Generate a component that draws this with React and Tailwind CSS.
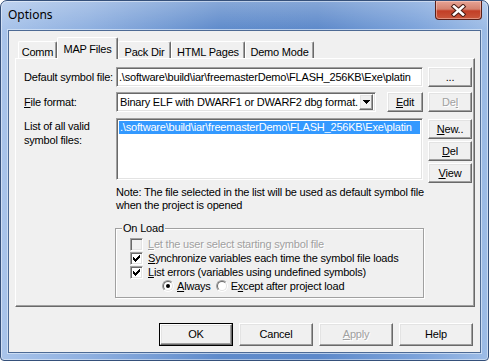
import React from "react";

const F = "font-['Liberation_Sans',Arial,sans-serif] text-[11px] tracking-[-0.2px] text-black";
const raised =
  "border border-t-white border-l-white border-r-[#696969] border-b-[#696969] shadow-[inset_-1px_-1px_0_#a0a0a0,inset_1px_1px_0_#e3e3e3] bg-[#f0f0f0]";
const sunken =
  "border border-t-[#a0a0a0] border-l-[#a0a0a0] border-r-white border-b-white shadow-[inset_1px_1px_0_#696969,inset_-1px_-1px_0_#e3e3e3]";
const dis = "text-[#a0a0a0] [text-shadow:1px_1px_0_#fff]";

function U({ children }) {
  return <span className="underline underline-offset-[1px] decoration-1">{children}</span>;
}

function Btn({ className = "", children, disabled }) {
  return (
    <div className={`${raised} ${className} flex items-center justify-center leading-none ${disabled ? dis : ""}`}>
      {children}
    </div>
  );
}

const CHECK = ["......X", ".....XX", "X...XXX", "XX.XXX.", "XXXXX..", ".XXX...", "..X...."];

function Check({ checked, disabled }) {
  return (
    <div
      className={`w-[13px] h-[13px] shrink-0 ${sunken} ${disabled ? "bg-[#f0f0f0]" : "bg-white"} flex items-center justify-center`}
    >
      {checked && (
        <svg width="7" height="7" viewBox="0 0 7 7" shapeRendering="crispEdges">
          {CHECK.flatMap((row, y) =>
            row.split("").map((c, x) => (c === "X" ? <rect key={`${x}-${y}`} x={x} y={y} width="1" height="1" fill="#000" /> : null))
          )}
        </svg>
      )}
    </div>
  );
}

function Radio({ checked }) {
  return (
    <div className="w-[12px] h-[12px] shrink-0 rounded-full border border-t-[#a0a0a0] border-l-[#a0a0a0] border-r-white border-b-white">
      <div className="w-full h-full rounded-full border border-t-[#696969] border-l-[#696969] border-r-[#e3e3e3] border-b-[#e3e3e3] bg-white flex items-center justify-center">
        {checked && <div className="w-[4px] h-[4px] rounded-full bg-black" />}
      </div>
    </div>
  );
}

function Tab({ children, className = "", selected }) {
  return (
    <div
      className={`${className} rounded-t-[2px] border-t border-l border-t-white border-l-white border-r border-r-[#696969] shadow-[inset_-1px_0_0_#a0a0a0] bg-[#f0f0f0] flex justify-center ${
        selected ? "h-[22px] -mb-[1px] relative z-10 pt-[3px]" : "h-[17px] pt-[2px]"
      }`}
    >
      {children}
    </div>
  );
}

export default function App() {
  return (
    <div className="w-[489px] h-[361px] bg-white">
      <div className="w-[489px] h-[361px] rounded-t-[7px] rounded-b-[4px] border border-[#35507a] bg-[linear-gradient(to_right,#a9c4ea,#8fb0e0_18%,#5f8bcb_45%,#5d89ca_65%,#7ba2da_85%,#9dbce6)] shadow-[inset_0_0_0_1px_rgba(255,255,255,0.45)] flex flex-col overflow-hidden">
        {/* title bar */}
        <div className="h-[29px] shrink-0 flex items-start justify-between bg-[linear-gradient(to_bottom,rgba(255,255,255,0.25),rgba(255,255,255,0))]">
          <span className="pl-[7px] pt-[6px] text-[12px] leading-[16px] font-['Noto_Sans',sans-serif] text-black">Options</span>
          <div className="mr-[6px] w-[47px] h-[19px] rounded-b-[4px] border border-t-0 border-[#5a1f17] bg-[linear-gradient(to_bottom,#e6a395,#d4826f_45%,#c23e26_55%,#c9573c)] shadow-[inset_0_0_0_1px_rgba(255,220,210,0.45)] flex items-center justify-center">
            <svg width="17" height="13" viewBox="0 0 17 13">
              <path d="M4 2.5 L13 10.5 M13 2.5 L4 10.5" stroke="#4a1c14" strokeWidth="4.6" strokeLinecap="square" />
              <path d="M4 2.5 L13 10.5 M13 2.5 L4 10.5" stroke="#fff" strokeWidth="2.6" strokeLinecap="square" />
            </svg>
          </div>
        </div>

        {/* client area */}
        <div className={`ml-[7px] w-[473px] h-[323px] border border-[#4d6a94] shadow-[0_0_0_1px_rgba(220,232,248,0.7)] bg-[#f0f0f0] flex flex-col ${F}`}>
          {/* tabs */}
          <div className="h-[27px] shrink-0 pl-[9px] flex items-end">
            <Tab className="w-[39px]">Comm</Tab>
            <Tab className="w-[61px]" selected>
              MAP Files
            </Tab>
            <Tab className="w-[53px]">Pack Dir</Tab>
            <Tab className="w-[74px]">HTML Pages</Tab>
            <Tab className="w-[69px]">Demo Mode</Tab>
          </div>

          {/* panel */}
          <div className="ml-[6px] w-[460px] h-[249px] shrink-0 border border-t-white border-l-white border-r-[#696969] border-b-[#696969] shadow-[inset_-1px_-1px_0_#a0a0a0] pt-[8px] pl-[8px] flex flex-col">
            {/* row 1 */}
            <div className="flex items-center h-[20px]">
              <div className="w-[92px] whitespace-nowrap">Default symbol file:</div>
              <div className={`w-[307px] h-[20px] bg-white ${sunken} overflow-hidden whitespace-nowrap pl-[2px] leading-[18px]`}>
                .\software\build\iar\freemasterDemo\FLASH_256KB\Exe\platin
              </div>
              <Btn className="ml-[5px] w-[44px] h-[20px]">...</Btn>
            </div>

            {/* row 2 */}
            <div className="flex items-center h-[20px] mt-[5px]">
              <div className="w-[92px]">
                <U>F</U>ile format:
              </div>
              <div className={`w-[260px] h-[20px] bg-white ${sunken} flex items-center pl-[3px] pr-[2px] whitespace-nowrap`}>
                <span className="flex-1 overflow-hidden">Binary ELF with DWARF1 or DWARF2 dbg format.</span>
                <div className={`${raised} w-[14px] h-[16px] shrink-0 flex items-center justify-center`}>
                  <svg width="7" height="4" viewBox="0 0 7 4" shapeRendering="crispEdges">
                    <path d="M0 0 H7 L3.5 4 Z" fill="#000" />
                  </svg>
                </div>
              </div>
              <Btn className="ml-[11px] w-[36px] h-[20px]">
                <U>E</U>dit
              </Btn>
              <Btn className="ml-[5px] w-[44px] h-[20px]" disabled>
                De<U>l</U>
              </Btn>
            </div>

            {/* row 3 */}
            <div className="flex items-start mt-[6px]">
              <div className="w-[92px] leading-[14px] pt-[1px]">
                List of all valid
                <br />
                symbol files:
              </div>
              <div className={`w-[307px] h-[62px] bg-white ${sunken} p-[2px]`}>
                <div className="h-[13px] bg-[#3399ff] text-white leading-[13px] whitespace-nowrap overflow-hidden pl-[1px]">
                  .\software\build\iar\freemasterDemo\FLASH_256KB\Exe\platin
                </div>
              </div>
              <div className="ml-[5px] flex flex-col">
                <Btn className="mt-[1px] w-[44px] h-[20px]">
                  <U>N</U>ew..
                </Btn>
                <Btn className="mt-[2px] w-[44px] h-[20px]">
                  <U>D</U>el
                </Btn>
                <Btn className="mt-[2px] w-[44px] h-[20px]">
                  <U>V</U>iew
                </Btn>
              </div>
            </div>

            {/* note */}
            <div className="ml-[92px] mt-[3px] leading-[13px] whitespace-nowrap">
              Note: The file selected in the list will be used as default symbol file
              <br />
              when the project is opened
            </div>

            {/* group box */}
            <div className="relative ml-[91px] mt-[16px] w-[309px] h-[70px] border border-[#a0a0a0] shadow-[1px_1px_0_#fff,inset_1px_1px_0_#fff] pt-[8px] pl-[14px] flex flex-col">
              <span className="absolute left-[6px] -top-[8px] px-[1px] bg-[#f0f0f0] leading-[14px]">On Load</span>
              <div className="h-[14px] flex items-center">
                <Check disabled />
                <span className={`ml-[5px] ${dis}`}>
                  <U>L</U>et the user select starting symbol file
                </span>
              </div>
              <div className="h-[14px] flex items-center">
                <Check checked />
                <span className="ml-[5px]">
                  <U>S</U>ynchronize variables each time the symbol file loads
                </span>
              </div>
              <div className="h-[14px] flex items-center">
                <Check checked />
                <span className="ml-[5px]">
                  <U>L</U>ist errors (variables using undefined symbols)
                </span>
              </div>
              <div className="h-[14px] flex items-center pl-[32px]">
                <Radio checked />
                <span className="ml-[3px]">
                  <U>A</U>lways
                </span>
                <div className="ml-[5px]">
                  <Radio />
                </div>
                <span className="ml-[3px]">
                  E<U>x</U>cept after project load
                </span>
              </div>
            </div>
          </div>

          {/* dialog buttons */}
          <div className="mt-[16px] pr-[7px] flex justify-end gap-[6px]">
            <div className="w-[74px] h-[23px] border border-black">
              <Btn className="w-full h-full">OK</Btn>
            </div>
            <Btn className="w-[74px] h-[23px]">Cancel</Btn>
            <Btn className="w-[74px] h-[23px]" disabled>
              <U>A</U>pply
            </Btn>
            <Btn className="w-[74px] h-[23px]">Help</Btn>
          </div>
        </div>
      </div>
    </div>
  );
}
